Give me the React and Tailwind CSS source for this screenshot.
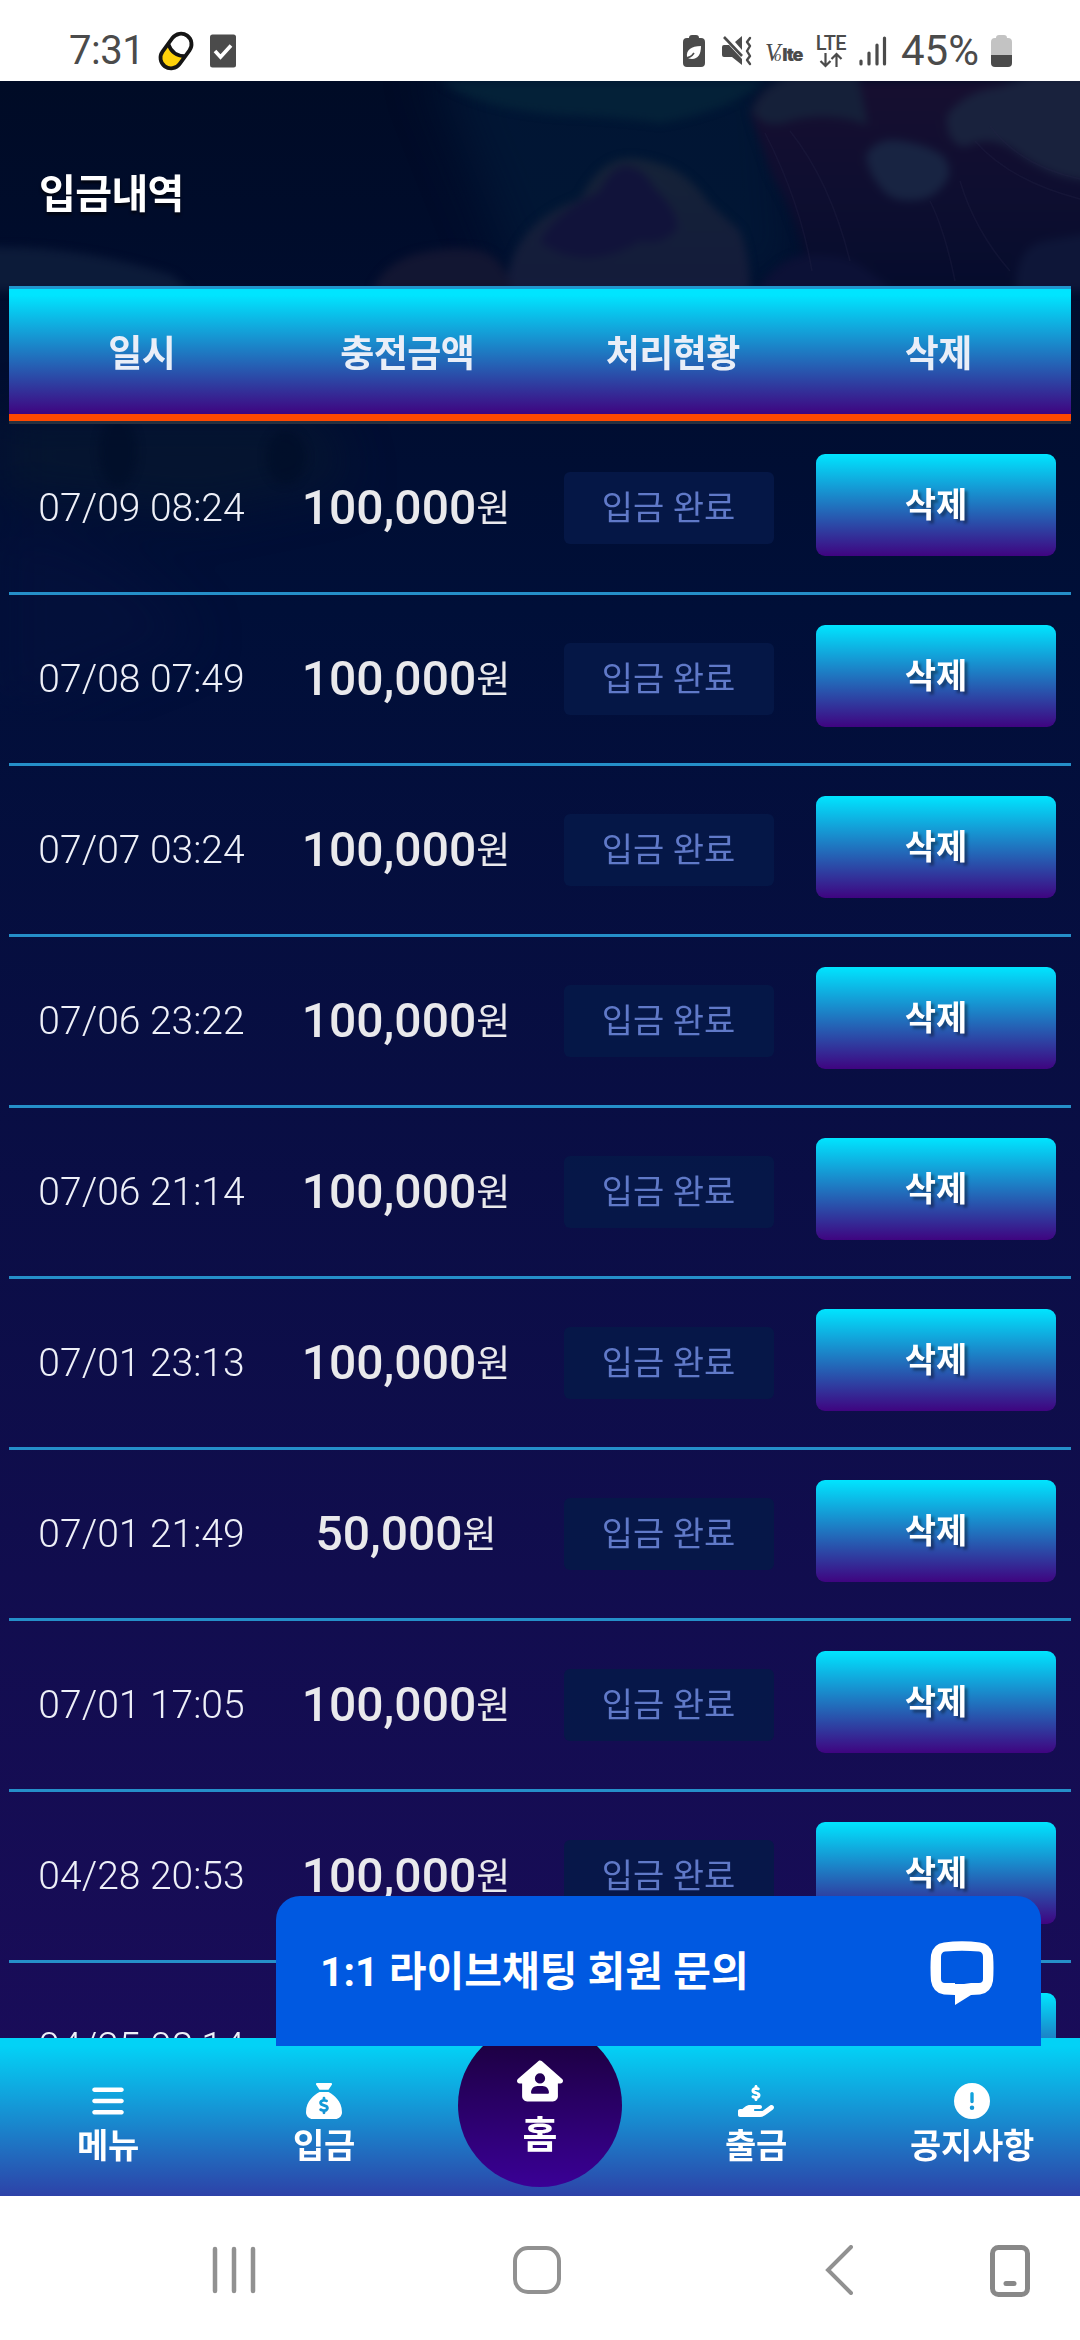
import { FaBars, FaSackDollar, FaHouseUser, FaHandHoldingDollar, FaCircleExclamation } from 'react-icons/fa6'

const deposits = [
  { date: '07/09 08:24', amount: '100,000' },
  { date: '07/08 07:49', amount: '100,000' },
  { date: '07/07 03:24', amount: '100,000' },
  { date: '07/06 23:22', amount: '100,000' },
  { date: '07/06 21:14', amount: '100,000' },
  { date: '07/01 23:13', amount: '100,000' },
  { date: '07/01 21:49', amount: '50,000' },
  { date: '07/01 17:05', amount: '100,000' },
  { date: '04/28 20:53', amount: '100,000' },
  { date: '04/25 08:14', amount: '100,000' },
]

const columns = ['일시', '충전금액', '처리현황', '삭제']

function StatusBar() {
  return (
    <header className="flex h-[81px] shrink-0 items-center justify-between bg-white pl-[69px] pr-[68px] pt-[21px] text-[#4b4b4b]">
      <div className="flex items-center">
        <span className="w-[72px] text-[40px] leading-none tracking-[-0.5px]">7:31</span>
        <svg className="ml-[16px] h-10 w-[38px]" viewBox="0 0 38 40" fill="none">
          <g transform="rotate(36 19 20)">
            <rect x="8.500" y="1" width="21" height="38" rx="10.500" fill="#fff" />
            <path d="M9 20q10 6 20 0v8a10 10 0 01-20 0z" fill="#ffd20a" />
            <rect x="8.500" y="1" width="21" height="38" rx="10.500" stroke="#151515" strokeWidth="3.800" />
            <path d="M9 19q10 7 20 0" stroke="#151515" strokeWidth="3.600" />
          </g>
        </svg>
        <svg className="ml-[14px] h-[34px] w-[28px]" viewBox="0 0 28 34">
          <rect x="1" y="0.5" width="26" height="33" rx="2.5" fill="#4b4b4b" />
          <path d="M6 17l5.500 6L22 11.500" fill="none" stroke="#fff" strokeWidth="3.600" />
        </svg>
      </div>

      <div className="flex items-center">
        <svg className="h-8 w-[22px]" viewBox="0 0 22 32">
          <path d="M6 3q0-3 3-3h4q3 0 3 3h2q4 0 4 4v21q0 4-4 4H4q-4 0-4-4V7q0-4 4-4z" fill="#4b4b4b" />
          <path d="M4 22c-1-7 4-11 14-11 0 8-3 13-9 13-3 0-4-1-5-2z" fill="#fff" />
          <path d="M2 23c4 0 7-2 9-5" fill="none" stroke="#4b4b4b" strokeWidth="1.600" />
        </svg>
        <svg className="ml-[17px] h-[30px] w-[30px]" viewBox="0 0 30 30" fill="#4b4b4b">
          <path d="M0 11q0-2 2-2h5l13 14v6L10 21H2q-2 0-2-2zM13 6l7-6v14z" />
          <path d="M2 1l18 19" stroke="#4b4b4b" strokeWidth="2.600" />
          <path d="M28 2l-3 4 3 4-3 5 3 5-3 4 3 4" fill="none" stroke="#4b4b4b" strokeWidth="2.400" strokeLinecap="round" strokeLinejoin="round" />
        </svg>
        <div className="ml-[13px] mt-[2px] flex w-[42px] items-baseline leading-none">
          <span className="font-['Liberation_Serif'] text-[25px] italic leading-none tracking-[-6px]">V</span>
          <span className="font-['Liberation_Serif'] text-[14px] italic leading-none">o</span>
          <span className="ml-px font-['Inter'] text-[18px] font-black leading-none tracking-[-1.2px]">lte</span>
        </div>
        <div className="ml-[8px] flex w-8 flex-col items-center">
          <span className="text-[20px] font-medium leading-[17px] tracking-[-0.5px]">LTE</span>
          <svg className="h-[16px] w-6" viewBox="0 0 24 16" fill="none" stroke="#4b4b4b" strokeWidth="2.200">
            <path d="M6.500 1v13M1.500 9l5 5 5-5M17.500 15V2M12.500 7l5-5 5 5" />
          </svg>
        </div>
        <svg className="ml-[12px] h-[30px] w-7" viewBox="0 0 28 30" stroke="#4b4b4b" strokeWidth="3.200" strokeLinecap="round">
          <path d="M2 25v3M10 17v11M18 9v19M25.500 2v26" />
        </svg>
        <span className="ml-[14px] w-[83px] text-[42px] leading-none">45%</span>
        <svg className="ml-[7px] h-8 w-[21px]" viewBox="0 0 21 32">
          <path d="M5 3q0-3 3-3h5q3 0 3 3h1q4 0 4 4v13H0V7q0-4 4-4z" fill="#c3c3c3" />
          <path d="M0 20h21v8q0 4-4 4H4q-4 0-4-4z" fill="#4b4b4b" />
        </svg>
      </div>
    </header>
  )
}

// faint underwater scenery behind the title and the first rows
function Scenery() {
  return (
    <svg className="absolute inset-x-0 top-0 h-[640px] w-full" viewBox="0 0 1080 640" preserveAspectRatio="none">
      <defs>
        <filter id="soft" x="-20%" y="-20%" width="140%" height="140%" colorInterpolationFilters="sRGB">
          <feGaussianBlur stdDeviation="4" />
        </filter>
        <filter id="haze" x="-60%" y="-60%" width="220%" height="220%" colorInterpolationFilters="sRGB">
          <feGaussianBlur stdDeviation="24" />
        </filter>
        <linearGradient id="fur" x1="0" y1="0" x2="0" y2="1">
          <stop offset="0" stopColor="#170f30" />
          <stop offset="0.55" stopColor="#0e0e30" />
          <stop offset="1" stopColor="#050c2c" />
        </linearGradient>
        <linearGradient id="rock" x1="0" y1="0" x2="0" y2="1">
          <stop offset="0" stopColor="#152338" />
          <stop offset="1" stopColor="#141b3b" />
        </linearGradient>
      </defs>
      <g filter="url(#haze)">
        <path d="M430 -20H780L800 205H520z" fill="#021a38" opacity="0.75" />
        <path d="M0 335H320L350 400L200 430L0 410z" fill="#07182f" opacity="0.7" />
        <path d="M0 440Q120 450 200 560L0 640z" fill="#08123f" opacity="0.4" />
      </g>
      <g filter="url(#soft)">
        <path d="M440 0H765Q730 30 660 42Q620 36 560 34Q480 28 440 0z" fill="#06263a" opacity="0.7" />
        <path d="M-10 166Q80 164 172 194L190 210H-10z" fill="#0c1b39" />
        <path d="M506 210Q508 178 523 158Q540 132 580 118Q596 86 618 79Q640 73 675 89Q696 102 709 122L740 150Q750 175 750 210z" fill="url(#rock)" />
        <path d="M540 162Q550 135 599 111Q612 84 627 85Q645 88 654 107Q675 125 678 146Q665 165 640 160Q600 185 560 172z" fill="#11133a" />
        <path d="M372 210Q385 180 420 172Q455 164 482 170Q505 178 512 210z" fill="#121632" />
        <path d="M750 32Q760 0 792 0H1090V210H812Q800 140 772 95z" fill="url(#fur)" />
        <path d="M752 30Q765 0 795 -5H858Q864 24 868 44Q830 30 790 40Q765 50 752 30z" fill="#152039" />
        <path d="M866 74Q876 58 895 59Q925 62 943 75Q953 88 947 99Q935 118 916 119Q892 122 881 107Q868 92 866 74z" fill="#182442" />
        <path d="M947 34Q965 10 999 6L1030 -5H1090V100Q1050 98 1015 70Q990 52 965 66Q945 62 947 34z" fill="#19223d" />
        <path d="M757 210Q780 172 813 174Q845 174 860 184L895 210z" fill="#0c1136" />
        <path d="M1016 210Q1015 165 1045 160L1090 152V210z" fill="#0e1638" />
      </g>
      <g filter="url(#soft)" opacity="0.7">
        <ellipse cx="286" cy="376" rx="20" ry="27" fill="#000e29" />
        <ellipse cx="118" cy="370" rx="19" ry="36" fill="#000e29" />
      </g>
      <g stroke="#222244" strokeWidth="1.500" fill="none" opacity="0.35">
        <path d="M765 52Q800 120 812 190M790 50Q830 100 850 180M960 100Q975 150 1010 190M975 60Q1010 100 1080 118M990 45Q1020 85 1080 98M930 120Q945 150 955 200" />
      </g>
    </svg>
  )
}

function DepositRow({ date, amount }) {
  return (
    <li className="flex h-[171px] items-center border-b-[3px] border-[#258fc9]">
      <span className="w-[265px] text-center text-[39px] font-light text-[#eef0f8]">{date}</span>
      <span className="flex w-[264px] items-baseline justify-center text-[#e9e9ec]">
        <b className="text-[48px] font-medium">{amount}</b>
        <span className="relative -top-0.5 text-[37px]">원</span>
      </span>
      <span className="flex w-[267px] justify-center">
        <span className="mr-[6px] flex h-[72px] w-[210px] items-center justify-center rounded-md bg-[#051848]/90 text-[34px] text-[#6079c8]">
          입금 완료
        </span>
      </span>
      <span className="flex w-[266px] justify-center">
        <button type="button" className="mb-[6px] mr-[4px] h-[102px] w-[240px] rounded-[9px] bg-linear-to-b/srgb from-[#00e5ff] to-[#3f0480] text-[34px] font-bold text-white [text-shadow:3px_3px_3px_rgba(0,0,0,0.4)]">
          삭제
        </button>
      </span>
    </li>
  )
}

function NavItem({ icon: Icon, label }) {
  return (
    <a className="flex w-[216px] flex-col items-center pt-[45px] text-white">
      <Icon className="size-9" />
      <span className="mt-[5px] text-[34px] font-bold leading-[44px] tracking-[-0.3px]">{label}</span>
    </a>
  )
}

function BottomNav() {
  return (
    <nav className="absolute inset-x-0 bottom-0 flex h-[158px] bg-linear-to-b/srgb from-[#03d2f6] from-5% to-[#2d42a8]">
      <NavItem icon={FaBars} label="메뉴" />
      <NavItem icon={FaSackDollar} label="입금" />
      <div className="flex w-[216px] justify-center">
        <a className="-mt-[15px] flex size-[164px] flex-col items-center rounded-full bg-linear-to-b/srgb from-[#1c0040] from-10% to-[#3a0096] pt-[35px] text-white">
          <FaHouseUser className="size-[46px]" />
          <span className="mt-[4px] text-[38px] font-bold leading-[54px]">홈</span>
        </a>
      </div>
      <NavItem icon={FaHandHoldingDollar} label="출금" />
      <NavItem icon={FaCircleExclamation} label="공지사항" />
    </nav>
  )
}

function ChatBar() {
  return (
    <button type="button" className="absolute bottom-[150px] left-[276px] flex h-[150px] w-[765px] items-center justify-between rounded-t-[24px] bg-[#0059e1] pl-[44px] pr-[47px] text-white">
      <span className="mt-[3px] text-[41px] font-bold">1:1 라이브채팅 회원 문의</span>
      <svg className="mt-[3px] h-[64px] w-[64px]" viewBox="0 0 64 64">
        <path fillRule="evenodd" fill="#fff" d="M14 1.500Q32-1 50 1.500Q61 3 63 14Q64 27 63 40Q61 52 50 53.500L41 54L25 64V43H34L41 42H49Q53 42 53 38V16Q53 11 49 10.500Q32 9 15 10.500Q11 11 11 16V38Q11 42 15 42H25V54L14 53.500Q3 52 1 40Q0 27 1 14Q3 3 14 1.500z" />
      </svg>
    </button>
  )
}

function SystemNav() {
  return (
    <footer className="flex h-36 shrink-0 items-center bg-white pl-[212px] pt-[3px] text-[#919191]">
      <svg className="h-12 w-[44px]" viewBox="0 0 44 48" stroke="currentColor" strokeWidth="4.500" strokeLinecap="round">
        <path d="M3 3v42M22 3v42M41 3v42" />
      </svg>
      <svg className="ml-[257px] size-12" viewBox="0 0 48 48" fill="none" stroke="currentColor" strokeWidth="4">
        <rect x="2" y="2" width="44" height="44" rx="13" />
      </svg>
      <svg className="ml-[264px] h-[50px] w-7" viewBox="0 0 28 50" fill="none" stroke="currentColor" strokeWidth="4" strokeLinecap="round">
        <path d="M26 2L3 25l23 23" />
      </svg>
      <svg className="ml-[137px] mt-[2px] h-[52px] w-10" viewBox="0 0 40 52" fill="none" stroke="#888" strokeWidth="5">
        <rect x="2.500" y="2.500" width="35" height="47" rx="6" />
        <path d="M16 38.500h8" strokeLinecap="round" />
      </svg>
    </footer>
  )
}

export default function App() {
  return (
    <div className="flex h-[2340px] w-[1080px] flex-col overflow-hidden font-['Roboto','Noto_Sans_CJK_KR',sans-serif]">
      <StatusBar />
      <main className="relative flex-1 overflow-hidden bg-linear-to-b/srgb from-[#000b26] from-0% via-[#000f38] via-25% to-[#1a0c5a] to-95%">
        <Scenery />
        <div className="relative px-[9px]">
          <h1 className="flex h-[205px] items-center pl-[30px] pt-[23px] text-[40px] font-bold tracking-[-0.6px] text-white [text-shadow:0_3px_3px_rgba(0,0,0,0.6)]">
            입금내역
          </h1>
          <div className="flex h-[138px] flex-col border-b-[3px] border-t-[3px] border-b-[#27303f] border-t-[#2196cc]">
            <div className="flex flex-1 items-center border-b-[7px] border-[#ff4800] bg-linear-to-b/srgb from-[#00e5ff] from-5% to-[#3f0480] pt-[7px]">
              {columns.map((c) => (
                <span key={c} className="flex-1 text-center text-[37px] font-bold tracking-[-0.6px] text-[#e9eef8]">
                  {c}
                </span>
              ))}
            </div>
          </div>
          <ul>
            {deposits.map((d) => (
              <DepositRow key={d.date} {...d} />
            ))}
          </ul>
        </div>
        <BottomNav />
        <ChatBar />
      </main>
      <SystemNav />
    </div>
  )
}
